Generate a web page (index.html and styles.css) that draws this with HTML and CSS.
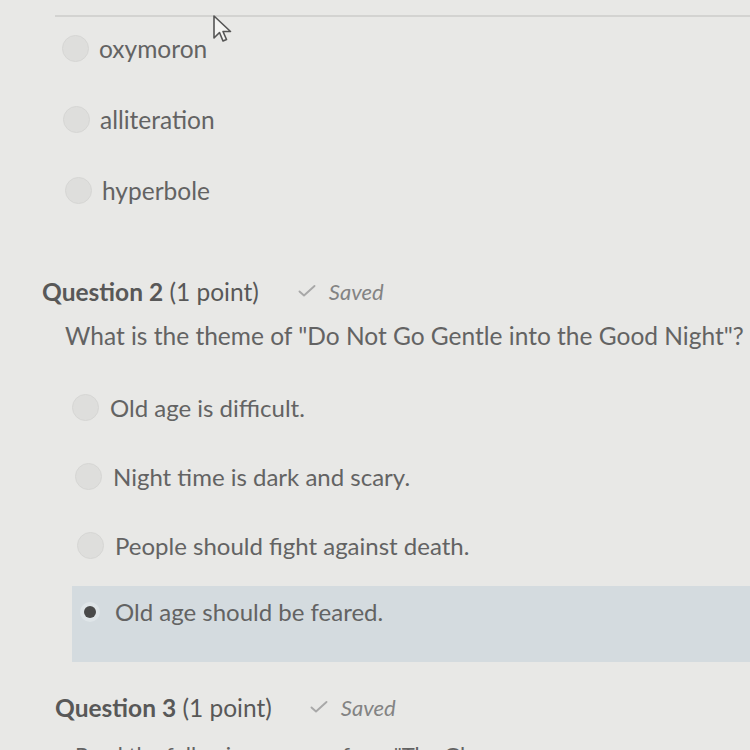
FILE: index.html
```html
<!DOCTYPE html>
<html>
<head>
<meta charset="utf-8">
<link rel="stylesheet" href="styles.css">
</head>
<body>
<div class="page">
  <div class="divider"></div>
  <ul class="choices first">
    <li class="choice c1"><span class="radio"></span><span class="label">oxymoron</span></li>
    <li class="choice c2"><span class="radio"></span><span class="label">alliteration</span></li>
    <li class="choice c3"><span class="radio"></span><span class="label">hyperbole</span></li>
  </ul>

  <section class="question q2">
    <div class="qhead"><span class="qtitle"><b>Question 2</b> (1 point)</span><span class="saved"><svg class="check" viewBox="0 0 18 14" width="18" height="14"><path d="M1.5 7.5 L6 11.5 L16.5 2" fill="none" stroke="#a8a8a8" stroke-width="1.9" stroke-linecap="round" stroke-linejoin="round"/></svg><i>Saved</i></span></div>
    <p class="prompt">What is the theme of "Do Not Go Gentle into the Good Night"?</p>
    <ul class="choices second">
      <li class="choice d1"><span class="radio"></span><span class="label">Old age is difficult.</span></li>
      <li class="choice d2"><span class="radio"></span><span class="label">Night time is dark and scary.</span></li>
      <li class="choice d3"><span class="radio"></span><span class="label">People should fight against death.</span></li>
      <li class="choice d4 selected"><span class="radio on"></span><span class="label">Old age should be feared.</span></li>
    </ul>
  </section>

  <section class="question q3">
    <div class="qhead"><span class="qtitle"><b>Question 3</b> (1 point)</span><span class="saved"><svg class="check" viewBox="0 0 18 14" width="18" height="14"><path d="M1.5 7.5 L6 11.5 L16.5 2" fill="none" stroke="#a8a8a8" stroke-width="1.9" stroke-linecap="round" stroke-linejoin="round"/></svg><i>Saved</i></span></div>
    <p class="prompt cut">Read the following passage from "The Glass</p>
  </section>

  <svg class="cursor" viewBox="0 0 24 32" width="24" height="32"><path d="M2 2 L2 24 L7.5 18.5 L11 27 L14.5 25.5 L11 17.5 L18.5 17.5 Z" fill="#f4f4f2" stroke="#555" stroke-width="1.6" stroke-linejoin="round"/></svg>
</div>
</body>
</html>
```

FILE: styles.css
```css
html, body {
  margin: 0;
  padding: 0;
}
body {
  background: #e8e8e6;
  font-family: Lato, "Open Sans", sans-serif;
  color: #636363;
  width: 750px;
  height: 750px;
  overflow: hidden;
}
.page {
  position: relative;
  padding-top: 15px;
}
.divider {
  margin-left: 55px;
  border-top: 2px solid #d3d3d1;
}
.choices {
  list-style: none;
  margin: 0;
  padding: 0;
}
.choice {
  display: flex;
  align-items: center;
  height: 70px;
  font-size: 24px;
}
.radio {
  flex: none;
  width: 27px;
  height: 27px;
  border-radius: 50%;
  background: #dededc;
  border: 1px solid #d6d6d4;
  box-sizing: border-box;
  margin-right: 10px;
}
.first {
  margin-top: -4px;
}
.first .choice {
  height: 71px;
  font-size: 24.5px;
}
.c1 { padding-left: 62px; }
.c2 { padding-left: 63px; }
.c3 { padding-left: 65px; }

.q2 {
  margin-top: 48px;
}
.qhead {
  display: flex;
  align-items: center;
  height: 34px;
  font-size: 24.5px;
  color: #585858;
}
.q2 .qhead { padding-left: 42px; }
.qtitle b {
  font-weight: 700;
}
.saved {
  display: flex;
  align-items: center;
  margin-left: 39px;
  font-size: 22px;
  color: #838383;
}
.check {
  margin-right: 13px;
}
.prompt {
  margin: 0;
  font-size: 24.5px;
  height: 34px;
  line-height: 34px;
  white-space: nowrap;
}
.q2 .prompt {
  margin-top: 11px;
  padding-left: 65px;
}
.second {
  margin-top: 20px;
}
.second .choice {
  height: 69px;
}
.d1 { padding-left: 72px; }
.d2 { padding-left: 75px; }
.d3 { padding-left: 77px; }
.second .d4 {
  margin-left: 72px;
  padding-left: 8px;
  height: 76px;
  box-sizing: border-box;
  align-items: flex-start;
  padding-top: 10px;
  margin-top: 6px;
  background: #d4dbdf;
}
.d4 .label {
  line-height: 32px;
}
.d1 .radio, .d2 .radio, .d3 .radio { margin-right: 11px; }
.radio.on {
  width: 12px;
  height: 12px;
  background: #4a4a4a;
  border: none;
  margin-top: 10px;
  margin-left: 4px;
  margin-right: 19px;
  box-shadow: 0 0 0 4px #dfe5e8;
}
.q3 {
  margin-top: 28px;
}
.q3 .qhead {
  padding-left: 55px;
}
.q3 .saved {
  margin-left: 38px;
}
.q3 .prompt {
  margin-top: 14px;
  padding-left: 75px;
  font-size: 22px;
  color: #636363;
}
.cursor {
  position: absolute;
  left: 212px;
  top: 14px;
}
```
